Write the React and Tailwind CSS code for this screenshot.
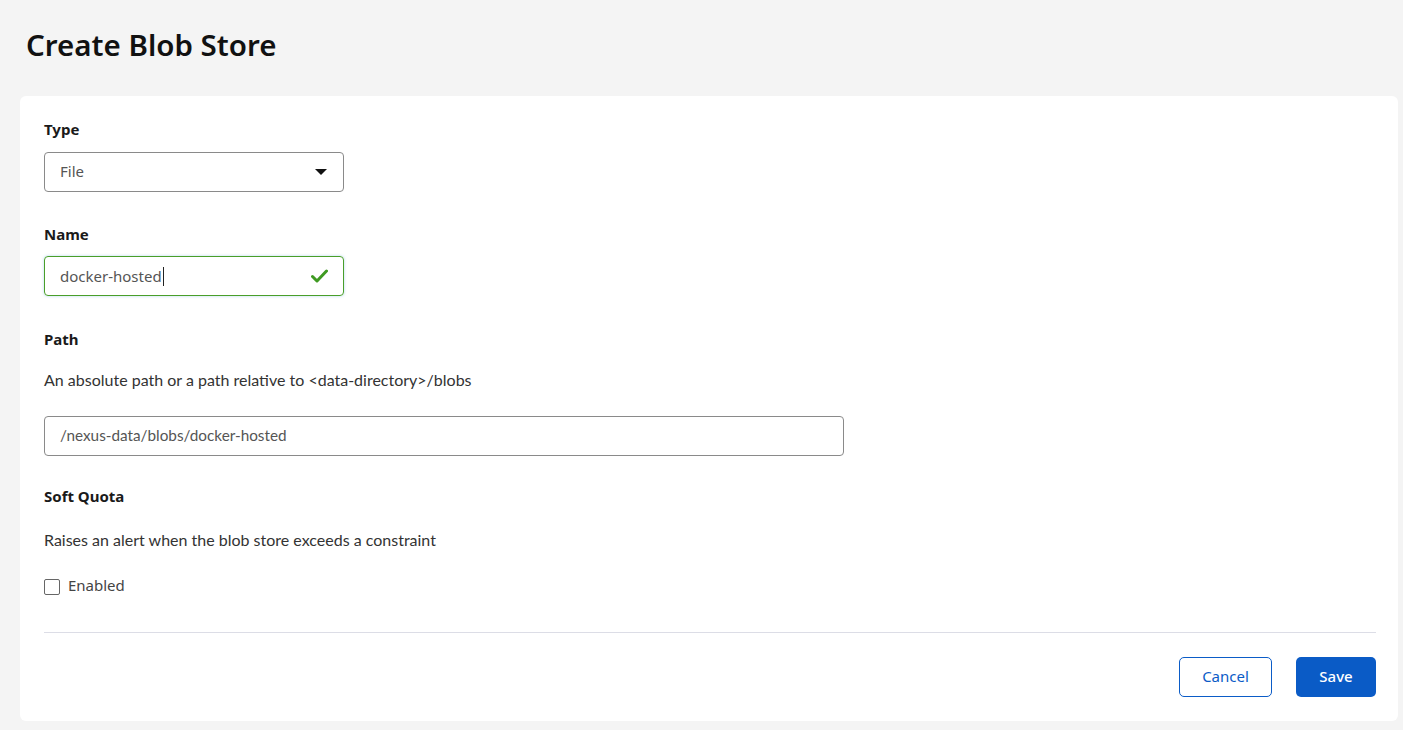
// App.jsx
const label = "text-[15px] font-bold text-[#1a1a1a] leading-none";
const help = "text-[16px] text-[#333] leading-none font-['Lato',sans-serif]";

function CheckIcon() {
  return (
    <svg width="17" height="14" viewBox="0 0 17 14" aria-hidden="true">
      <path d="M1.5 7.5 L6 12 L15.5 2" fill="none" stroke="#3f9a22" strokeWidth="3" strokeLinecap="round" strokeLinejoin="round" />
    </svg>
  );
}

export default function App() {
  return (
    <div className="min-h-[730px] bg-[#f4f4f4] px-5 pb-[10px] font-['Noto_Sans',sans-serif] text-[#222]">
      <h1 className="pt-[27px] pl-[6px] text-[29.5px] font-semibold leading-[36px] text-[#111]">
        Create Blob Store
      </h1>

      <div className="mt-[33px] w-[1378px] rounded-md bg-white pl-6 pr-[22px] pt-[26px] pb-[24px]">
        {/* Type */}
        <div className={label + " h-[14px] flex items-center"}>Type</div>
        <div className="mt-[16px] flex h-10 w-[300px] items-center justify-between rounded border border-[#8a8a8a] pl-[15px] pr-[16px]">
          <span className="text-[15px] text-[#555] -translate-y-px">File</span>
          <span className="h-0 w-0 border-x-[6px] border-t-[6px] border-x-transparent border-t-[#111]" />
        </div>

        {/* Name */}
        <div className={label + " mt-[35px] h-[14px] flex items-center"}>Name</div>
        <div className="mt-[15px] flex h-10 w-[300px] items-center justify-between rounded border border-[#4a9e2a] pl-[15px] pr-[15px] shadow-[0_0_3px_rgba(40,140,200,0.35)]">
          <span className="text-[15px] text-[#555] -translate-y-px">
            docker-hosted<span className="ml-[1px] inline-block h-[19px] w-px translate-y-[4px] bg-[#222]" />
          </span>
          <CheckIcon />
        </div>

        {/* Path */}
        <div className={label + " mt-[36px] h-[14px] flex items-center"}>Path</div>
        <p className={help + " mt-[26px]"}>
          An absolute path or a path relative to &lt;data-directory&gt;/blobs
        </p>
        <div className="mt-[28px] flex h-10 w-[800px] items-center rounded border border-[#8a8a8a] pl-[15px]">
          <span className="text-[15.3px] text-[#555] font-['Lato',sans-serif] -translate-y-px">/nexus-data/blobs/docker-hosted</span>
        </div>

        {/* Soft Quota */}
        <div className={label + " mt-[33px] h-[14px] flex items-center"}>Soft Quota</div>
        <p className={help + " mt-[29px]"}>Raises an alert when the blob store exceeds a constraint</p>
        <label className="mt-[26px] flex items-center gap-2">
          <span className="mt-[3px] h-4 w-4 rounded-[2px] border border-[#666] bg-white" />
          <span className="text-[15px] text-[#444]">Enabled</span>
        </label>

        <div className="mt-[35px] h-px bg-[#dcdde6]" />

        <div className="mt-6 flex justify-end gap-6">
          <button className="h-[40px] w-[93px] rounded-[5px] border border-[#0b5cc7] bg-white text-[15px] text-[#0b5cc7]">
            Cancel
          </button>
          <button className="h-[40px] w-[80px] rounded-[5px] bg-[#0a5bc6] text-[15px] font-medium text-white">
            Save
          </button>
        </div>
      </div>
    </div>
  );
}
